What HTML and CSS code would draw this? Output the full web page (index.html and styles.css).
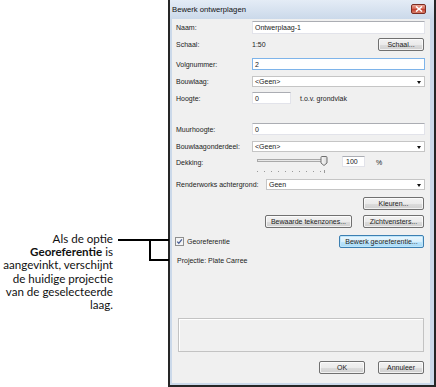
FILE: index.html
```html
<!DOCTYPE html>
<html lang="nl">
<head>
    <meta charset="UTF-8">
    <title>Bewerk ontwerplagen</title>
    <link rel="stylesheet" href="styles.css">
</head>
<body>
<div class="page">

    <!-- Uitleg links van het dialoog -->
    <div class="note">
        <p class="note-text">Als de optie<br><b>Georeferentie</b> is<br>aangevinkt, verschijnt<br>de huidige projectie<br>van de geselecteerde<br>laag.</p>
    </div>

    <div class="dialog">
        <div class="titlebar">
            <span class="title">Bewerk ontwerplagen</span>
            <span class="close">
                <svg width="8" height="6" viewBox="0 0 8 6"><path d="M1 0.5 L7 5.5 M7 0.5 L1 5.5" stroke="#fff" stroke-width="1.6"/></svg>
            </span>
        </div>

        <div class="body">
            <div class="row row-first">
                <span class="label">Naam:</span>
                <span class="field">Ontwerplaag-1</span>
            </div>
            <div class="row row-btn row-scale">
                <span class="label">Schaal:</span>
                <span class="value">1:50</span>
                <span class="btn btn-schaal">Schaal...</span>
            </div>
            <div class="row row-loose">
                <span class="label">Volgnummer:</span>
                <span class="field field-focus">2</span>
            </div>
            <div class="row">
                <span class="label">Bouwlaag:</span>
                <span class="select">&lt;Geen&gt;</span>
            </div>
            <div class="row">
                <span class="label">Hoogte:</span>
                <span class="field field-short">0</span>
                <span class="unit">t.o.v. grondvlak</span>
            </div>

            <div class="row row-section">
                <span class="label">Muurhoogte:</span>
                <span class="field">0</span>
            </div>
            <div class="row">
                <span class="label">Bouwlaagonderdeel:</span>
                <span class="select">&lt;Geen&gt;</span>
            </div>
            <div class="row row-slider">
                <span class="label">Dekking:</span>
                <svg class="slider" width="72" height="17" viewBox="0 0 72 17">
                    <rect x="0.5" y="3.5" width="69" height="2" fill="#e8e8e8" stroke="#a9a9a9"/>
                    <g fill="#9a9a9a">
                        <rect x="0" y="15" width="1" height="1"/>
                        <rect x="7" y="15" width="1" height="1"/>
                        <rect x="14" y="15" width="1" height="1"/>
                        <rect x="21" y="15" width="1" height="1"/>
                        <rect x="28" y="15" width="1" height="1"/>
                        <rect x="35" y="15" width="1" height="1"/>
                        <rect x="42" y="15" width="1" height="1"/>
                        <rect x="49" y="15" width="1" height="1"/>
                        <rect x="56" y="15" width="1" height="1"/>
                        <rect x="63" y="15" width="1" height="1"/>
                        <rect x="67" y="14" width="1" height="3"/>
                    </g>
                    <defs>
                        <linearGradient id="thumb" x1="0" y1="0" x2="1" y2="0">
                            <stop offset="0" stop-color="#fafafa"/>
                            <stop offset="1" stop-color="#d9d9d9"/>
                        </linearGradient>
                    </defs>
                    <path d="M65 0.5 H69 A1 1 0 0 1 70 1.5 V7 L67 9.5 L64 7 V1.5 A1 1 0 0 1 65 0.5 Z" fill="url(#thumb)" stroke="#6f6f6f"/>
                </svg>
                <span class="field field-pct">100</span>
                <span class="pct">%</span>
            </div>
            <div class="row">
                <span class="label label-wide">Renderworks achtergrond:</span>
                <span class="select">Geen</span>
            </div>

            <div class="row row-btn row-loose right">
                <span class="btn btn-kleuren">Kleuren...</span>
            </div>
            <div class="row row-btn right">
                <span class="btn btn-zones">Bewaarde tekenzones...</span>
                <span class="btn btn-kleuren">Zichtvensters...</span>
            </div>
            <div class="row row-btn row-loose">
                <span class="check">
                    <svg width="9" height="9" viewBox="0 0 9 9">
                        <rect x="0.5" y="0.5" width="8" height="8" fill="#f4f4f4" stroke="#8e8f8f"/>
                        <path d="M2.2 4.6 L3.8 6.3 L6.9 2.4" fill="none" stroke="#4a5f97" stroke-width="1.3"/>
                    </svg>
                    Georeferentie
                </span>
                <span class="btn btn-default">Bewerk georeferentie...</span>
            </div>
            <div class="row row-proj">
                <span class="proj">Projectie: Plate Carree</span>
            </div>

            <div class="group"></div>

            <div class="row row-btn row-footer right">
                <span class="btn btn-ok">OK</span>
                <span class="btn btn-ok">Annuleer</span>
            </div>
        </div>
    </div>

    <!-- Verwijslijnen over pagina en dialoog -->
    <svg class="leader" width="436" height="387" viewBox="0 0 436 387">
        <path d="M118 240 H169 M150 239 V261 M150 260 H169" fill="none" stroke="#000" stroke-width="2"/>
    </svg>
</div>
</body>
</html>
```

FILE: styles.css
```css
/* Basis */
* {
    box-sizing: border-box;
}

body {
    margin: 0;
    width: 436px;
    height: 387px;
    overflow: hidden;
    background: #fff;
    font-family: "Liberation Sans", Arial, sans-serif;
}

.page {
    position: relative;
    display: flex;
    height: 387px;
}

/* Uitleg */
.note {
    width: 168px;
    flex: none;
}

.note-text {
    margin: 232px 55px 0 0;
    text-align: right;
    font-family: Lato, "Open Sans", sans-serif;
    font-size: 11.6px;
    line-height: 13.2px;
    color: #111;
    white-space: nowrap;
}

.leader {
    position: absolute;
    top: 0;
    left: 0;
    pointer-events: none;
}

/* Venster */
.dialog {
    flex: none;
    width: 268px;
    height: 387px;
    display: flex;
    flex-direction: column;
    background: #cbd9ea;
    border: 2px solid #262626;
    border-top: 0;
    padding: 0 4px 2px 2px;
}

.titlebar {
    flex: none;
    height: 19px;
    display: flex;
    align-items: center;
    justify-content: space-between;
    padding-bottom: 1px;
    background: linear-gradient(#e4ecf6, #cbd9ea);
    margin: 0 -4px 0 -2px;
    padding-left: 2px;
    padding-right: 8px;
}

.title {
    font-size: 7.7px;
    color: #111;
}

.close {
    width: 15px;
    height: 10px;
    border: 1px solid #7b2c22;
    border-radius: 2px;
    background: linear-gradient(#eba797, #d4604f 50%, #c13d2c 52%, #d9806c);
    display: flex;
    align-items: center;
    justify-content: center;
}

.body {
    flex: 1;
    display: flex;
    flex-direction: column;
    background: #f0f0f0;
    padding: 0 5px 9px 4px;
    font-size: 7px;
    color: #222;
}

/* Rijen */
.row {
    flex: none;
    display: flex;
    align-items: center;
    height: 12px;
    margin-top: 5px;
}

.row-btn { height: 13px; }
.row-first { height: 13px; margin-top: 2px; }
.row-scale { margin-top: 4px; }
.row-loose { margin-top: 7px; }
.row-section { margin-top: 19px; }
.row-slider { height: 17px; margin-top: 4px; align-items: flex-start; }
.row-proj { margin-top: 6px; }
.row-footer { margin-top: 9px; }
.right { justify-content: flex-end; }

.label {
    width: 76px;
    flex: none;
}

.label-wide {
    width: 90px;
}

.value {
    flex: 1;
}

/* Invoervelden */
.field {
    flex: 1;
    height: 100%;
    display: flex;
    align-items: center;
    padding-left: 2px;
    background: #fff;
    border: 1px solid #e2e3ea;
    border-top-color: #abadb3;
}

.field-focus {
    border-color: #7eb4ea;
}

.field-short {
    flex: none;
    width: 39px;
}

.field-pct {
    flex: none;
    width: 23px;
    height: 11px;
    margin-left: 13px;
    padding-left: 3px;
}

.unit {
    margin-left: 9px;
}

.pct {
    margin-left: 11px;
    padding-top: 3px;
}

.slider {
    margin-left: 5px;
}

.row-slider .label {
    padding-top: 3px;
}

.select {
    flex: 1;
    height: 11px;
    position: relative;
    display: flex;
    align-items: center;
    padding-left: 2px;
    background: #fff;
    border: 1px solid #c5c5c5;
}

.select::after {
    content: "";
    position: absolute;
    right: 3px;
    top: 4px;
    border-left: 2.5px solid transparent;
    border-right: 2.5px solid transparent;
    border-top: 3px solid #111;
}

/* Knoppen */
.btn {
    flex: none;
    height: 13px;
    display: flex;
    align-items: center;
    justify-content: center;
    border: 1px solid #707070;
    border-radius: 2px;
    background: linear-gradient(#f2f2f2 0, #ebebeb 50%, #dddddd 51%, #cfcfcf 100%);
    box-shadow: inset 0 0 0 1px rgba(255, 255, 255, 0.7);
    margin-right: 1px;
}

.btn-schaal { width: 46px; }
.btn-kleuren { width: 61px; }
.btn-zones { width: 87px; margin-right: 11px; }
.btn-ok { width: 46px; }
.btn-ok + .btn-ok { margin-left: 12px; }

.btn-default {
    width: 85px;
    margin-left: auto;
    border-color: #3c7fb1;
    background: linear-gradient(#eaf6fd 0, #d9f0fc 50%, #bee6fd 51%, #a7d9f5 100%);
    box-shadow: inset 0 0 0 1px #bfe6fb;
}

/* Georeferentie */
.check {
    display: flex;
    align-items: center;
    gap: 3px;
    margin-left: -1px;
}

.proj {
    padding-left: 1px;
}

.group {
    flex: none;
    height: 34px;
    margin: auto 1px 0 2px;
    border: 1px solid #c3c3c3;
    box-shadow: inset 1px 1px 0 #fff;
}
```
